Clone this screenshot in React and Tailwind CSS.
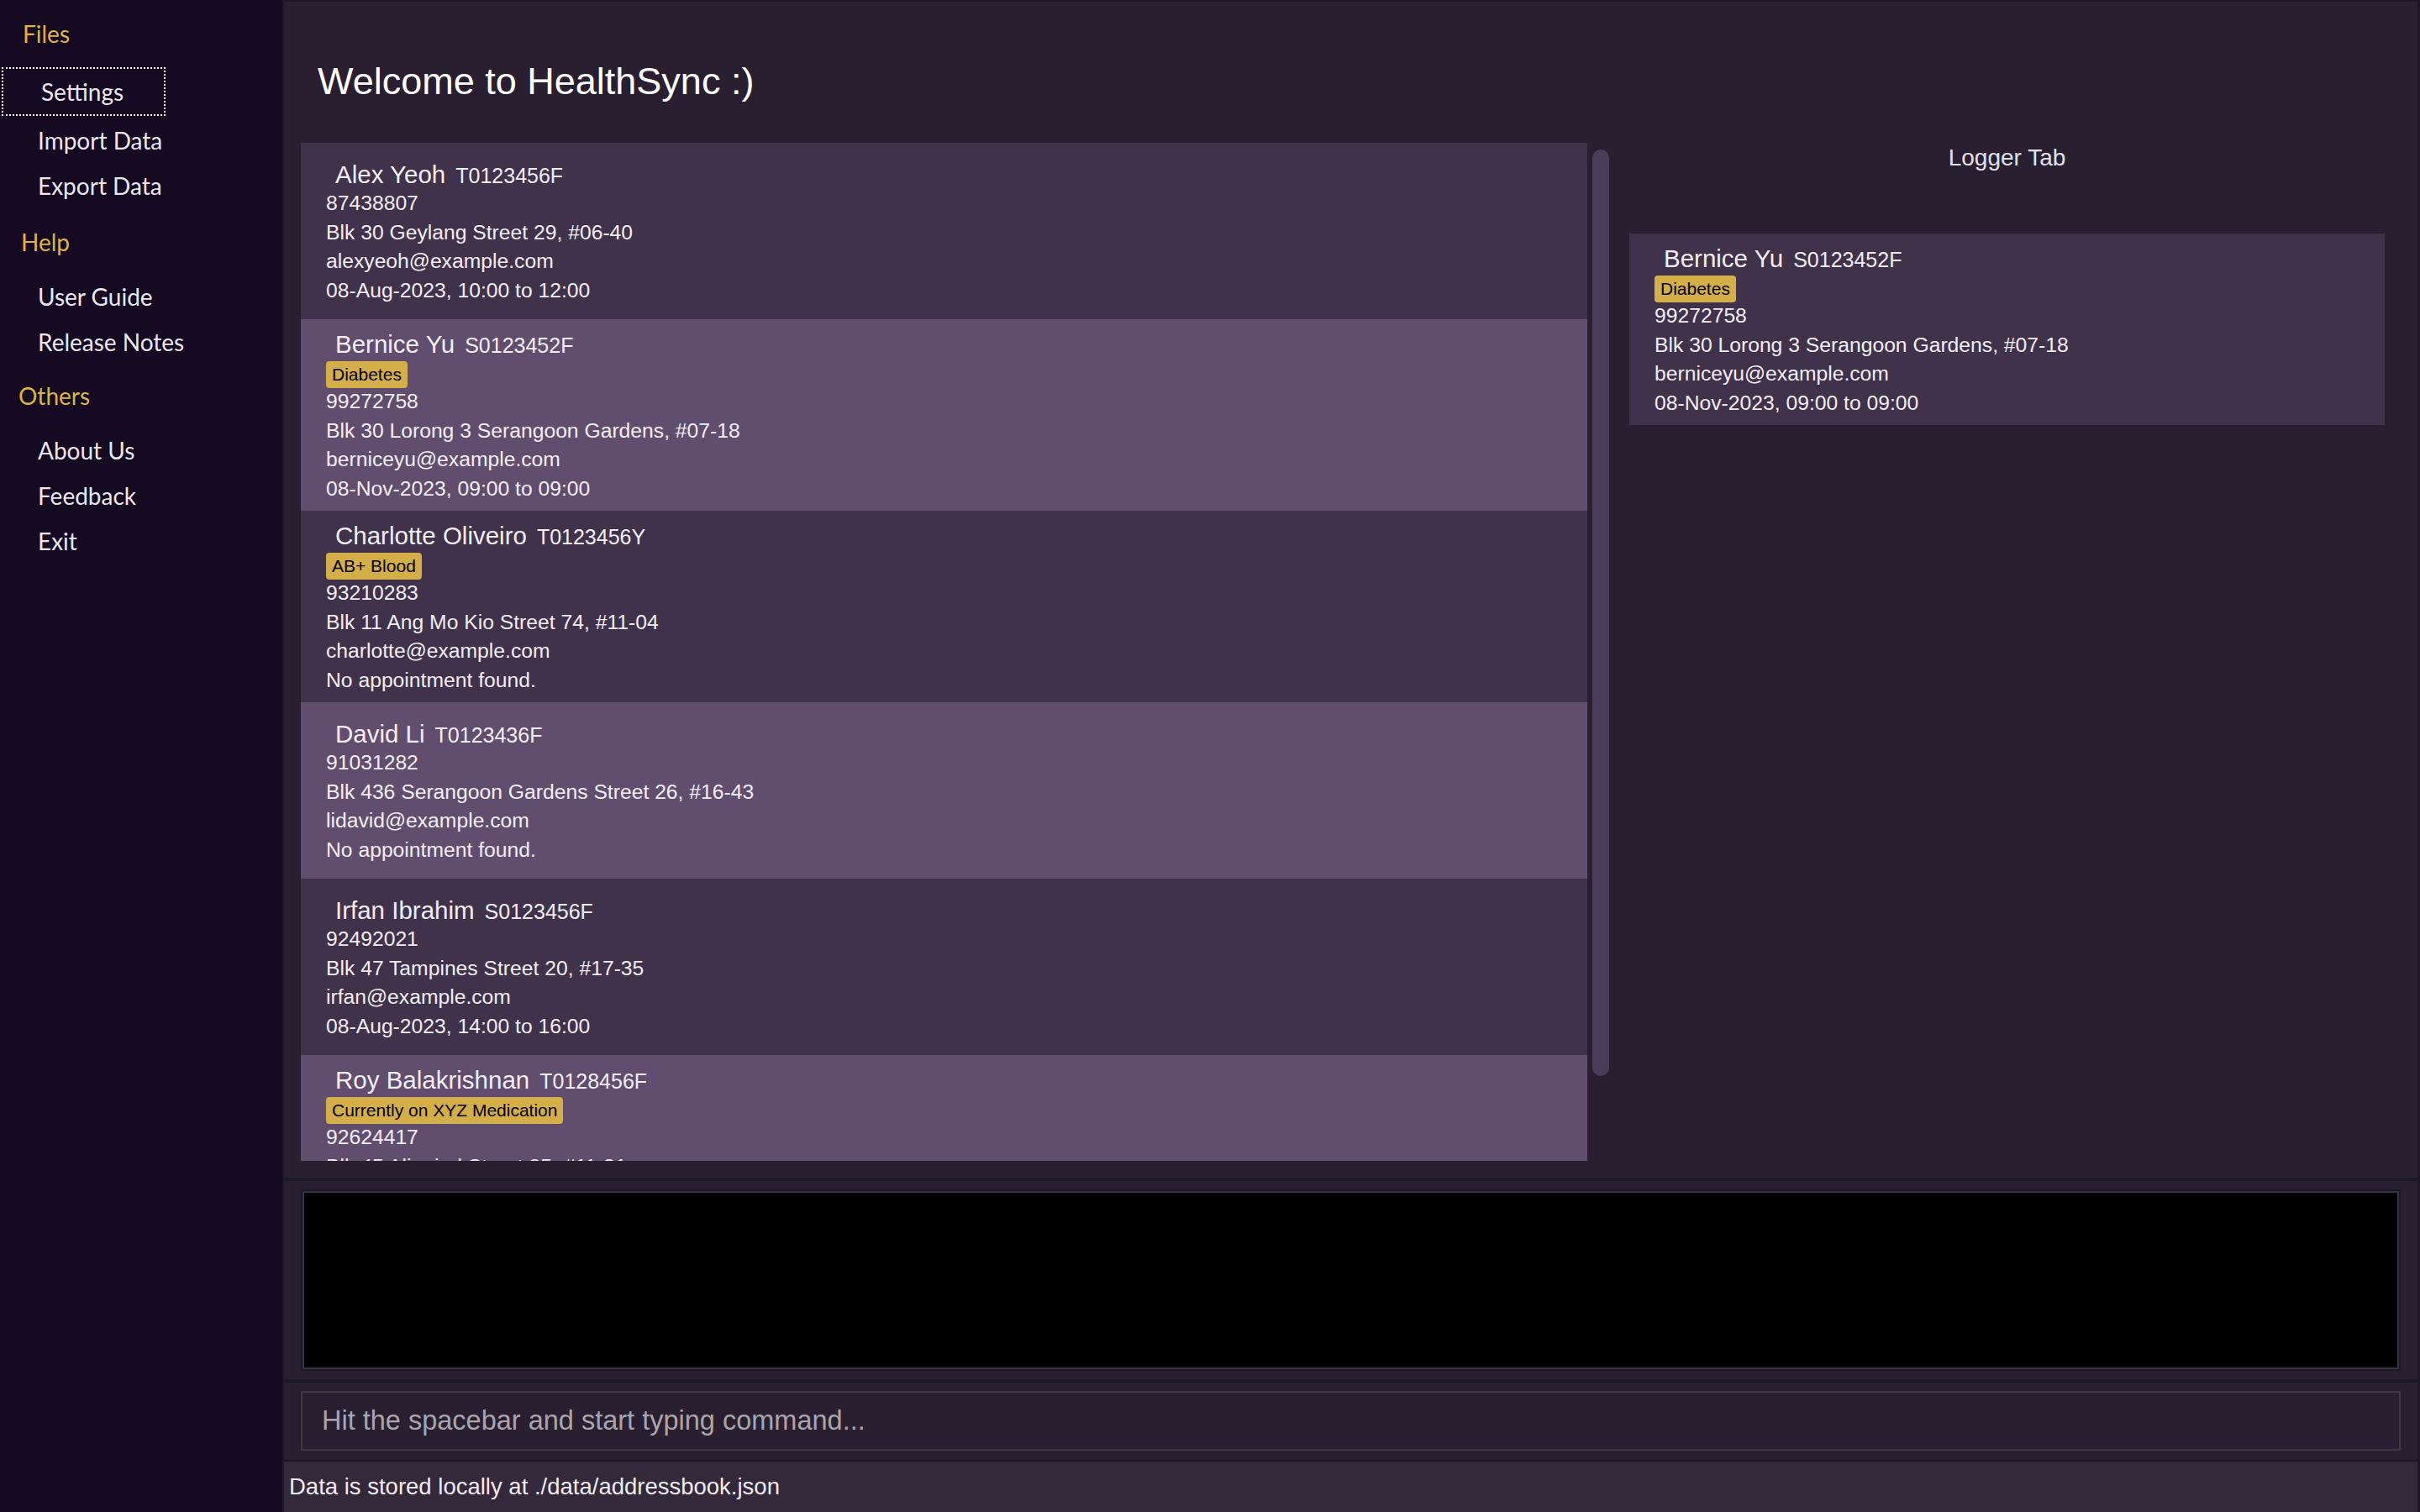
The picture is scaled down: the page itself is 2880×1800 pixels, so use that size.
import React from "react";

const patients = [
  {
    name: "Alex Yeoh",
    nric: "T0123456F",
    phone: "87438807",
    address: "Blk 30 Geylang Street 29, #06-40",
    email: "alexyeoh@example.com",
    appt: "08-Aug-2023, 10:00 to 12:00",
  },
  {
    name: "Bernice Yu",
    nric: "S0123452F",
    tags: ["Diabetes"],
    phone: "99272758",
    address: "Blk 30 Lorong 3 Serangoon Gardens, #07-18",
    email: "berniceyu@example.com",
    appt: "08-Nov-2023, 09:00 to 09:00",
  },
  {
    name: "Charlotte Oliveiro",
    nric: "T0123456Y",
    tags: ["AB+ Blood"],
    phone: "93210283",
    address: "Blk 11 Ang Mo Kio Street 74, #11-04",
    email: "charlotte@example.com",
    appt: "No appointment found.",
  },
  {
    name: "David Li",
    nric: "T0123436F",
    phone: "91031282",
    address: "Blk 436 Serangoon Gardens Street 26, #16-43",
    email: "lidavid@example.com",
    appt: "No appointment found.",
  },
  {
    name: "Irfan Ibrahim",
    nric: "S0123456F",
    phone: "92492021",
    address: "Blk 47 Tampines Street 20, #17-35",
    email: "irfan@example.com",
    appt: "08-Aug-2023, 14:00 to 16:00",
  },
  {
    name: "Roy Balakrishnan",
    nric: "T0128456F",
    tags: ["Currently on XYZ Medication"],
    phone: "92624417",
    address: "Blk 45 Aljunied Street 85, #11-31",
    email: "royb@example.com",
    appt: "No appointment found.",
  },
];

const PersonCard = ({ person, light }) => {
  const hasTags = person.tags && person.tags.length > 0;
  return (
    <div
      className={`shrink-0 pl-[30px] ${light ? "bg-[#614e6e]" : "bg-[#40324a]"} ${
        hasTags ? "pt-[12px] pb-[9px]" : "pt-[20px] pb-[17px]"
      }`}
    >
      <div className="flex items-baseline h-[35px] leading-[35px] pl-[11px]">
        <span className="text-[29.5px] text-[#f1eef3]">{person.name}</span>
        <span className="text-[25px] text-[#f1eef3] ml-[12px]">{person.nric}</span>
      </div>
      {hasTags && (
        <div className="flex gap-2 mt-[3px] h-[32px] mb-[-1px]">
          {person.tags.map((tag) => (
            <span
              key={tag}
              className="bg-[#d4ae48] text-black text-[21px] leading-[32px] px-[7px] rounded-[4px]"
            >
              {tag}
            </span>
          ))}
        </div>
      )}
      <div className="text-[24.7px] leading-[34.5px] text-[#f1eef3]">
        <div>{person.phone}</div>
        <div>{person.address}</div>
        <div>{person.email}</div>
        <div>{person.appt}</div>
      </div>
    </div>
  );
};

const SideItem = ({ label, className = "" }) => (
  <div className={`h-[54px] flex items-center pl-[45px] text-[#ebe7ee] ${className}`}>
    {label}
  </div>
);

const SideHeader = ({ label, className = "" }) => (
  <div className={`h-[54px] flex items-center text-[#dbb544] ${className}`}>{label}</div>
);

export default function App() {
  return (
    <div
      className="w-[2880px] h-[1800px] flex overflow-hidden"
      style={{ fontFamily: '"Liberation Sans", Arial, sans-serif' }}
    >
      {/* sidebar */}
      <div
        className="w-[336px] shrink-0 bg-[#150a21] text-[28px]"
        style={{ fontFamily: "Lato, sans-serif" }}
      >
        <div className="h-[44px] mt-[18px] flex items-center pl-[27px] text-[#dbb544]">Files</div>
        <div className="ml-[2px] mt-[18px] w-[195px] h-[58px] border-2 border-dotted border-white flex items-center pl-[45px] text-[#ebe7ee]">
          Settings
        </div>
        <SideItem label="Import Data" className="mt-[2px]" />
        <SideItem label="Export Data" />
        <SideHeader label="Help" className="mt-[13px] pl-[25px]" />
        <SideItem label="User Guide" className="mt-[11px]" />
        <SideItem label="Release Notes" />
        <SideHeader label="Others" className="mt-[10px] pl-[22px]" />
        <SideItem label="About Us" className="mt-[11px]" />
        <SideItem label="Feedback" className="h-[53px]" />
        <SideItem label="Exit" />
      </div>

      {/* main */}
      <div className="flex-1 flex flex-col bg-[#2a1f30] border-l-2 border-t-2 border-r-[3px] border-[#1e1826]">
        <div className="h-[1400px] flex flex-col">
          <div className="h-[168px] pt-[22px] pl-[40px] flex items-center">
            <h1 className="text-[45px] text-white">Welcome to HealthSync :)</h1>
          </div>
          <div className="flex h-[1212px] px-[20px]">
            <div className="w-[1531px] h-full overflow-hidden flex flex-col">
              {patients.map((p, i) => (
                <PersonCard key={p.name} person={p} light={i % 2 === 1} />
              ))}
            </div>
            <div className="ml-[6px] mt-[8px] w-[20px] h-[1103px] rounded-[10px] bg-[#4b3d57]" />
            <div className="ml-[5px] w-[937px] flex flex-col">
              <div className="h-[36px] flex items-center justify-center text-[28px] text-[#e4e0e7]">
                Logger Tab
              </div>
              <div className="mx-[19px] mt-[72px]">
                <PersonCard person={patients[1]} light={false} />
              </div>
            </div>
          </div>
        </div>
        <div className="h-[4px] bg-[#1e1826]" />
        <div className="h-[236px] px-[20px] pt-[10px]">
          <div className="h-[216px] border-2 border-[#1e1826]">
            <div className="h-full border-2 border-[#3b2e46] bg-black" />
          </div>
        </div>
        <div className="h-[4px] bg-[#1e1826]" />
        <div className="h-[92px] px-[20px] pt-[10px]">
          <div className="h-[71px] border-2 border-[#3c3a40] flex items-center pl-[23px] text-[32.5px] text-[#a9a5ad]">
            Hit the spacebar and start typing command...
          </div>
        </div>
        <div className="h-[2px] bg-[#1e1826]" />
        <div className="h-[60px] bg-[#34283b] flex items-center pl-[6px] text-[27.5px] text-[#efebf1]">
          Data is stored locally at ./data/addressbook.json
        </div>
      </div>
    </div>
  );
}
